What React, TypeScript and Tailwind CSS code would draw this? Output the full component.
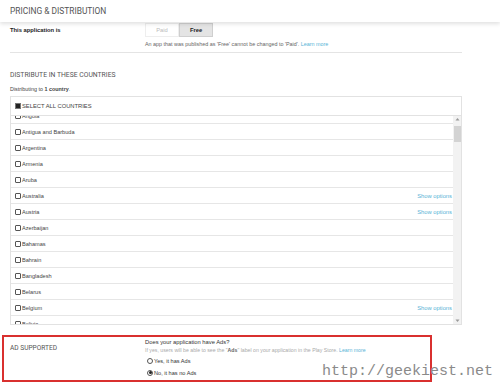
import React from 'react';

const countries: { name: string; options?: boolean }[] = [
  { name: 'Angola' },
  { name: 'Antigua and Barbuda' },
  { name: 'Argentina' },
  { name: 'Armenia' },
  { name: 'Aruba' },
  { name: 'Australia', options: true },
  { name: 'Austria', options: true },
  { name: 'Azerbaijan' },
  { name: 'Bahamas' },
  { name: 'Bahrain' },
  { name: 'Bangladesh' },
  { name: 'Belarus' },
  { name: 'Belgium', options: true },
  { name: 'Bolivia' },
];

function Checkbox() {
  return <span className="w-[6px] h-[6px] border border-[#555] rounded-[1px] bg-white shrink-0" />;
}

function CountryRow({ name, options }: { name: string; options?: boolean }) {
  return (
    <div className="h-[16px] flex items-center gap-[1px] pl-[4px] pr-[1px] border-b border-[#e6e6e6]">
      <Checkbox />
      <span className="flex-1 text-[5.6px] text-[#444]">{name}</span>
      {options && <span className="text-[5.8px] text-[#58b3d6]">Show options</span>}
    </div>
  );
}

function Radio({ checked, label }: { checked?: boolean; label: string }) {
  return (
    <label className="flex items-center gap-[1px] h-[12px] pl-[2px]">
      <span className="w-[6px] h-[6px] rounded-full border border-[#555] bg-white flex items-center justify-center">
        {checked && <span className="w-[3px] h-[3px] rounded-full bg-[#222]" />}
      </span>
      <span className="text-[5.6px] text-[#333]">{label}</span>
    </label>
  );
}

export default function App() {
  return (
    <div className="relative w-[500px] h-[384px] bg-white overflow-hidden font-['Liberation_Sans',Arial,sans-serif]">
      {/* page header */}
      <header className="relative z-10 h-[22px] flex items-center px-[10px] bg-white shadow-[0_2px_4px_rgba(0,0,0,0.12)]">
        <h1 className="font-['Roboto',sans-serif] text-[8.4px] text-[#555]">PRICING &amp; DISTRIBUTION</h1>
      </header>

      {/* pricing */}
      <section className="flex pt-[1px]">
        <div className="w-[145px] pl-[10px] pt-[3px] text-[5.8px] font-bold text-[#222]">This application is</div>
        <div className="flex flex-col">
          <div className="flex">
            <span className="w-[34px] h-[14px] flex items-center justify-center border border-[#eeeeee] bg-white text-[5.8px] text-[#bbb]">Paid</span>
            <span className="w-[34px] h-[14px] flex items-center justify-center border border-[#cfcfcf] bg-[#e4e4e4] text-[5.8px] font-bold text-[#222]">Free</span>
          </div>
          <p className="mt-[3px] text-[5.4px] text-[#666]">
            An app that was published as 'Free' cannot be changed to 'Paid'. <span className="text-[#58b3d6]">Learn more</span>
          </p>
        </div>
      </section>
      <div className="mx-[10px] w-[452px] mt-[4px] border-t border-[#e4e4e4]" />

      {/* distribution */}
      <section className="px-[10px]">
        <h2 className="mt-[17px] font-['Roboto',sans-serif] text-[6.8px] text-[#555]">DISTRIBUTE IN THESE COUNTRIES</h2>
        <p className="mt-[5px] text-[5.4px] text-[#444]">
          Distributing to <b>1 country</b>.
        </p>
        <div className="mt-[3px] w-[452px] border border-[#e2e2e2]">
          <div className="h-[19px] flex items-center gap-[1px] pl-[4px] border-b border-[#e2e2e2]">
            <span className="w-[6px] h-[6px] border border-[#777] bg-white flex items-center justify-center">
              <span className="w-[4px] h-[4px] bg-[#222]" />
            </span>
            <span className="text-[5.8px] text-[#444]">SELECT ALL COUNTRIES</span>
          </div>
          <div className="flex h-[208px]">
            <div className="flex-1 overflow-hidden">
              <div className="-mt-[8px]">
                {countries.map((c) => (
                  <CountryRow key={c.name} name={c.name} options={c.options} />
                ))}
              </div>
            </div>
            {/* scrollbar */}
            <div className="w-[8px] bg-[#f2f2f2] flex flex-col items-center">
              <svg width="5" height="5" viewBox="0 0 5 5" className="mt-[1px]">
                <path d="M0.5 3.5 L2.5 1 L4.5 3.5 Z" fill="#9a9a9a" />
              </svg>
              <div className="mt-[4px] w-[7px] h-[16px] bg-[#d3d3d3]" />
              <div className="flex-1" />
              <svg width="5" height="5" viewBox="0 0 5 5" className="mb-[1px]">
                <path d="M0.5 1.5 L2.5 4 L4.5 1.5 Z" fill="#9a9a9a" />
              </svg>
            </div>
          </div>
        </div>
      </section>

      {/* ad supported */}
      <section className="mt-[10px] ml-[2px] w-[430px] h-[47px] border-2 border-[#d9302f] flex">
        <div className="w-[141px] pl-[6px] pt-[7px] font-['Roboto',sans-serif] text-[6.6px] text-[#555]">AD SUPPORTED</div>
        <div className="flex flex-col pt-[1px]">
          <p className="text-[5.8px] text-[#333]">Does your application have Ads?</p>
          <p className="text-[5.2px] text-[#aaa]">
            If yes, users will be able to see the "<b className="text-[#666]">Ads</b>" label on your application in the Play Store.{' '}
            <span className="text-[#58b3d6]">Learn more</span>
          </p>
          <Radio label="Yes, it has Ads" />
          <Radio checked label="No, it has no Ads" />
        </div>
      </section>

      {/* watermark */}
      <span className="absolute left-[322px] top-[364px] font-['Liberation_Mono',monospace] text-[15px] leading-none text-[#8a8a8a]">
        http://geekiest.net
      </span>
    </div>
  );
}
